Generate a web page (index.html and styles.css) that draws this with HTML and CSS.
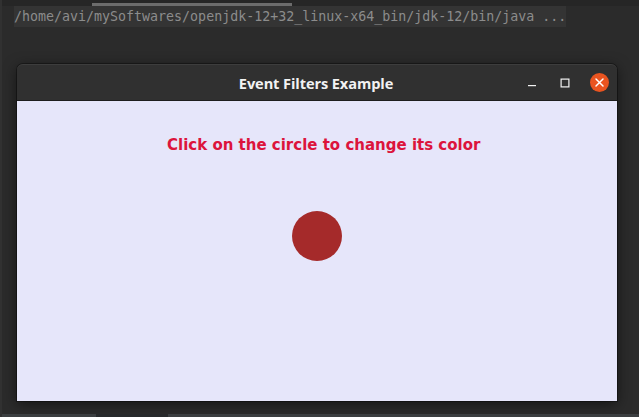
FILE: index.html
```html
<!DOCTYPE html>
<html>
<head>
<meta charset="utf-8">
<link rel="stylesheet" href="styles.css">
</head>
<body>
<div class="screen">
  <div class="topstrip"><div class="thumb"></div></div>
  <div class="console"><span class="cmd">/home/avi/mySoftwares/openjdk-12+32_linux-x64_bin/jdk-12/bin/java ...</span></div>
  <div class="desk">
    <div class="window">
      <div class="titlebar">
        <div class="title">Event Filters Example</div>
        <div class="controls">
          <svg class="ctl min" width="12" height="12" viewBox="0 0 12 12"><rect x="2" y="8" width="8" height="1.2" fill="#f2f2f2"/></svg>
          <svg class="ctl max" width="12" height="12" viewBox="0 0 12 12"><rect x="2.1" y="2.1" width="7.8" height="7.8" fill="none" stroke="#f2f2f2" stroke-width="1.2"/></svg>
          <svg class="close" width="19" height="19" viewBox="0 0 19 19"><circle cx="9.5" cy="9.5" r="9.5" fill="#e95420"/><path d="M6 6 L13 13 M13 6 L6 13" stroke="#fff" stroke-width="1.5" stroke-linecap="round"/></svg>
        </div>
      </div>
      <div class="content">
        <div class="msg">Click on the circle to change its color</div>
        <div class="circle"></div>
      </div>
    </div>
  </div>
  <div class="bottomstrip"><div class="seg"></div></div>
</div>
</body>
</html>
```
FILE: styles.css
```css
html, body {
  margin: 0;
  padding: 0;
  background: #2b2b2b;
}
.screen {
  width: 639px;
  height: 417px;
  display: flex;
  flex-direction: column;
  overflow: hidden;
  background: #2b2b2b;
  border-left: 2px solid #313131;
  box-sizing: border-box;
}
.topstrip {
  height: 6px;
  background: #262626;
}
.thumb {
  margin-left: 90px;
  margin-top: 3px;
  width: 200px;
  height: 3px;
  background: #6c6c6c;
}
.console {
  height: 21px;
  padding-left: 12px;
  display: flex;
}
.cmd {
  background: #343434;
  color: #8c8c8c;
  font-family: "DejaVu Sans Mono", monospace;
  font-size: 13.3px;
  line-height: 21px;
  height: 21px;
  white-space: nowrap;
}
.desk {
  flex: 1;
  padding-top: 37px;
  padding-left: 15px;
}
.window {
  width: 600px;
  border-radius: 6px 6px 0 0;
  box-shadow: 0 3px 14px rgba(0, 0, 0, 0.55), 0 0 0 1px rgba(0, 0, 0, 0.35);
}
.titlebar {
  background: #303030;
  border-radius: 6px 6px 0 0;
  border-top: 1px solid #3d3d3d;
  border-bottom: 1px solid #1e1e1e;
  box-sizing: border-box;
  height: 37px;
  position: relative;
  display: flex;
  align-items: center;
  justify-content: center;
}
.title {
  color: #f2f2f2;
  font-family: "Open Sans", "Noto Sans", sans-serif;
  font-weight: 700;
  font-size: 14.6px;
  letter-spacing: -0.1px;
  padding-top: 1px;
  margin-left: -2px;
}
.controls {
  position: absolute;
  right: 8px;
  top: 8px;
  display: flex;
  align-items: center;
}
.min {
  margin-right: 21.5px;
}
.max {
  margin-right: 19px;
}
.content {
  height: 300px;
  background: #e6e6fa;
  display: flex;
  flex-direction: column;
}
.msg {
  margin-top: 35px;
  padding-left: 150px;
  color: #dc143c;
  font-family: "DejaVu Sans", sans-serif;
  font-weight: 700;
  font-size: 15px;
  line-height: 18px;
  white-space: nowrap;
}
.circle {
  margin-top: 57px;
  margin-left: 275px;
  width: 50px;
  height: 50px;
  border-radius: 50%;
  background: #a52a2a;
}
.bottomstrip {
  height: 3px;
  background: #3b3e40;
  display: flex;
}
.seg {
  margin-left: 94px;
  width: 72px;
  background: #27292b;
}
```
